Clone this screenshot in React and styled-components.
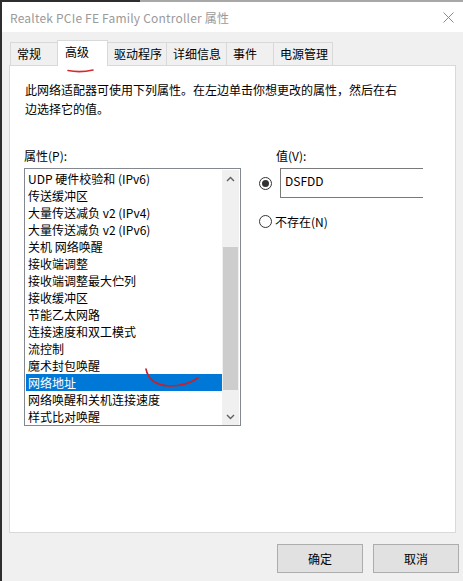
import React from "react";
import styled, { createGlobalStyle } from "styled-components";

const GlobalStyle = createGlobalStyle`
  html, body { margin: 0; padding: 0; }
  body {
    background: #3a3a3a;
    font-family: "Noto Sans CJK SC", "Noto Sans", sans-serif;
    font-size: 12px;
    color: #000;
  }
`;

const FONT = `"Noto Sans CJK SC", "Noto Sans", sans-serif`;

const Screen = styled.div`
  position: relative;
  width: 463px;
  height: 581px;
  overflow: hidden;
  background: linear-gradient(to right, #2e2e2e 140px, #a8a8a8 140px);
  padding: 2px 0 0 2px;
  box-sizing: border-box;
`;

const Window = styled.div`
  width: 461px;
  height: 579px;
  background: #f0f0f0;
  display: flex;
  flex-direction: column;
  font-family: ${FONT};
`;

const TitleBar = styled.div`
  height: 30px;
  background: #fff;
  display: flex;
  align-items: center;
  justify-content: space-between;
  padding: 0 9px 0 8px;
  flex-shrink: 0;
`;

const Title = styled.span`
  color: #9a9a9a;
  font-size: 12px;
  letter-spacing: 0.2px;
  font-family: "Segoe UI", ${FONT};
`;

const Body = styled.div`
  padding: 9px 7px 0 7px;
  display: flex;
  flex-direction: column;
`;

const TabStrip = styled.div`
  display: flex;
  align-items: flex-end;
  height: 24px;
  padding-left: 1px;
`;

const Tab = styled.div`
  position: relative;
  box-sizing: border-box;
  width: ${(p) => p.$w}px;
  height: ${(p) => (p.$active ? 26 : 23)}px;
  margin-left: -1px;
  margin-bottom: ${(p) => (p.$active ? -1 : 0)}px;
  padding-left: ${(p) => (p.$active ? 7 : 6)}px;
  border: 1px solid #d9d9d9;
  border-bottom: none;
  background: ${(p) => (p.$active ? "#fff" : "#f0f0f0")};
  z-index: ${(p) => (p.$active ? 2 : 1)};
  font-size: 12px;
  line-height: ${(p) => (p.$active ? 22 : 21)}px;
  white-space: nowrap;
  &:first-child { margin-left: 0; }
`;

const Panel = styled.div`
  box-sizing: border-box;
  height: 468px;
  background: #fff;
  border: 1px solid #d9d9d9;
  padding: 14px 14px 0 14px;
  display: flex;
  flex-direction: column;
`;

const Desc = styled.p`
  margin: 0;
  font-size: 12px;
  line-height: 19px;
  padding-left: 1px;
`;

const Columns = styled.div`
  display: grid;
  grid-template-columns: 217px 1fr;
  column-gap: 18px;
  margin-top: 29px;
`;

const Label = styled.div`
  font-size: 12px;
  line-height: 17px;
  padding-left: ${(p) => p.$indent || 0}px;
`;

const ListBox = styled.div`
  margin-top: 4px;
  box-sizing: border-box;
  width: 217px;
  height: 258px;
  border: 1px solid #828790;
  padding: 1px 1px 0 1px;
  display: flex;
`;

const Items = styled.div`
  flex: 1;
  display: flex;
  flex-direction: column;
`;

const Item = styled.div`
  height: 17px;
  line-height: 17px;
  padding-left: 2px;
  font-size: 12px;
  white-space: nowrap;
  overflow: hidden;
  background: ${(p) => (p.$selected ? "#0078d7" : "transparent")};
  color: ${(p) => (p.$selected ? "#fff" : "#000")};
`;

const ScrollBar = styled.div`
  width: 17px;
  height: 255px;
  background: #f0f0f0;
  display: flex;
  flex-direction: column;
`;

const ArrowCell = styled.div`
  height: 17px;
  display: flex;
  align-items: center;
  justify-content: center;
  flex-shrink: 0;
`;

const Track = styled.div`
  flex: 1;
  display: flex;
  flex-direction: column;
  padding: 0 1px;
`;

const Thumb = styled.div`
  background: #cdcdcd;
  height: 143px;
  margin-top: ${(p) => p.$offset}px;
`;

const RightCol = styled.div`
  display: flex;
  flex-direction: column;
`;

const RadioRow = styled.div`
  display: flex;
  align-items: center;
  gap: ${(p) => p.$gap}px;
  margin-top: ${(p) => p.$mt || 0}px;
`;

const Radio = styled.span`
  box-sizing: border-box;
  width: 13px;
  height: 13px;
  border-radius: 50%;
  border: 1px solid #333;
  background: #fff;
  display: flex;
  align-items: center;
  justify-content: center;
  flex-shrink: 0;
  &::after {
    content: "";
    display: ${(p) => (p.$checked ? "block" : "none")};
    width: 7px;
    height: 7px;
    border-radius: 50%;
    background: #333;
  }
`;

const TextBox = styled.div`
  box-sizing: border-box;
  width: 143px;
  height: 30px;
  border: 1px solid #7a7a7a;
  border-right: none;
  padding: 3px 0 0 4px;
  font-size: 12px;
  line-height: 17px;
  font-family: "Segoe UI", ${FONT};
`;

const RadioText = styled.span`
  font-size: 12px;
  line-height: 17px;
`;

const ButtonRow = styled.div`
  display: flex;
  justify-content: flex-end;
  gap: 10px;
  margin: 11px -3px 0 0;
`;

const Button = styled.div`
  box-sizing: border-box;
  width: 86px;
  height: 29px;
  border: 1px solid #adadad;
  background: #e1e1e1;
  display: flex;
  align-items: center;
  justify-content: center;
  font-size: 12px;
`;

const Annotation = styled.svg`
  position: absolute;
  left: 0;
  top: 0;
  pointer-events: none;
`;

const tabs = [
  { t: "常规", w: 48 },
  { t: "高级", w: 51, active: true },
  { t: "驱动程序", w: 60 },
  { t: "详细信息", w: 61 },
  { t: "事件", w: 48 },
  { t: "电源管理", w: 60 },
];

const items = [
  "UDP 硬件校验和 (IPv6)",
  "传送缓冲区",
  "大量传送减负 v2 (IPv4)",
  "大量传送减负 v2 (IPv6)",
  "关机 网络唤醒",
  "接收端调整",
  "接收端调整最大伫列",
  "接收缓冲区",
  "节能乙太网路",
  "连接速度和双工模式",
  "流控制",
  "魔术封包唤醒",
  "网络地址",
  "网络唤醒和关机连接速度",
  "样式比对唤醒",
];

const Chevron = ({ up }) => (
  <svg width="9" height="6" viewBox="0 0 9 6">
    <path
      d={up ? "M1 5 L4.5 1.5 L8 5" : "M1 1 L4.5 4.5 L8 1"}
      fill="none"
      stroke="#606060"
      strokeWidth="1.4"
    />
  </svg>
);

export default function App() {
  return (
    <>
      <GlobalStyle />
      <Screen>
        <Window>
          <TitleBar>
            <Title>Realtek PCIe FE Family Controller 属性</Title>
            <svg width="11" height="11" viewBox="0 0 11 11">
              <path d="M0.5 0.5 L10.5 10.5 M10.5 0.5 L0.5 10.5" stroke="#8a8a8a" strokeWidth="1" />
            </svg>
          </TitleBar>
          <Body>
            <TabStrip>
              {tabs.map((t) => (
                <Tab key={t.t} $w={t.w} $active={t.active}>
                  {t.t}
                </Tab>
              ))}
            </TabStrip>
            <Panel>
              <Desc>
                此网络适配器可使用下列属性。在左边单击你想更改的属性，然后在右
                <br />
                边选择它的值。
              </Desc>
              <Columns>
                <div>
                  <Label>属性(P):</Label>
                  <ListBox>
                    <Items>
                      {items.map((it) => (
                        <Item key={it} $selected={it === "网络地址"}>
                          {it}
                        </Item>
                      ))}
                    </Items>
                    <ScrollBar>
                      <ArrowCell>
                        <Chevron up />
                      </ArrowCell>
                      <Track>
                        <Thumb $offset={60} />
                      </Track>
                      <ArrowCell>
                        <Chevron />
                      </ArrowCell>
                    </ScrollBar>
                  </ListBox>
                </div>
                <RightCol>
                  <Label $indent={17}>值(V):</Label>
                  <RadioRow $gap={8} $mt={4}>
                    <Radio $checked />
                    <TextBox>DSFDD</TextBox>
                  </RadioRow>
                  <RadioRow $gap={3} $mt={15}>
                    <Radio />
                    <RadioText>不存在(N)</RadioText>
                  </RadioRow>
                </RightCol>
              </Columns>
            </Panel>
            <ButtonRow>
              <Button>确定</Button>
              <Button>取消</Button>
            </ButtonRow>
          </Body>
        </Window>
        <Annotation width="463" height="581" viewBox="0 0 463 581">
          <path d="M68 70.5 Q80 73 93 70" fill="none" stroke="#d42a2a" strokeWidth="1.6" strokeLinecap="round" />
          <path d="M146 369 Q149 385 170 386 Q186 386 198 378" fill="none" stroke="#c8202a" strokeWidth="1.6" strokeLinecap="round" />
        </Annotation>
      </Screen>
    </>
  );
}
